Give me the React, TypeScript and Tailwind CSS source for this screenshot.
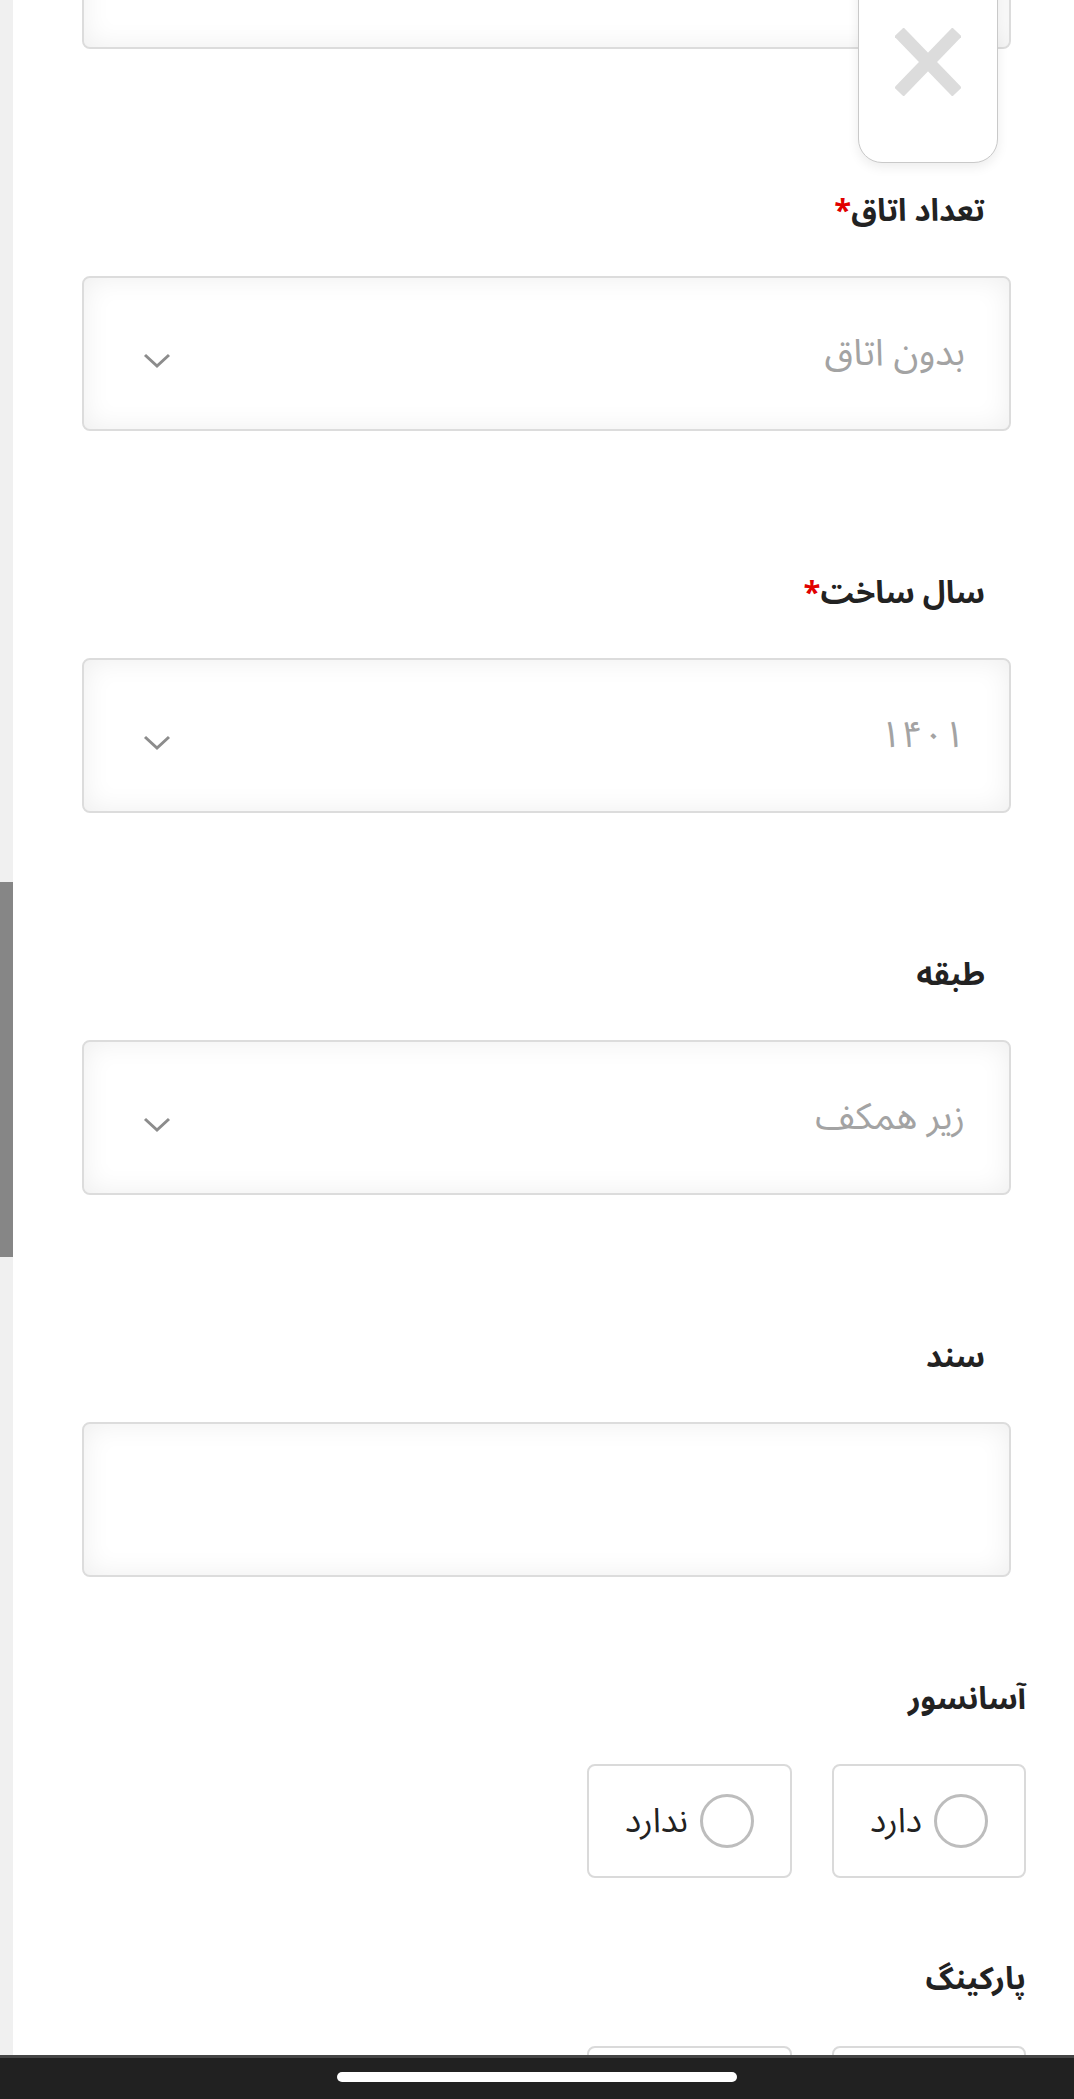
import React from 'react';

const fontStack = "font-['Noto_Sans_Arabic','DejaVu_Sans',sans-serif]";

const Chevron: React.FC = () => (
  <svg width="28" height="16" viewBox="0 0 28 16" className="mt-[14px] shrink-0">
    <polyline points="2,2 14,13 26,2" fill="none" stroke="#8c8c8c" strokeWidth="3" />
  </svg>
);

const FieldLabel: React.FC<{ text: string; required?: boolean; className?: string }> = ({ text, required, className }) => (
  <div className={`flex h-[40px] shrink-0 items-center text-[31px] font-bold leading-[40px] text-[#222] ${className ?? ''}`}>
    <span>{text}</span>
    {required && <span className="text-[#e10000]">*</span>}
  </div>
);

const SelectBox: React.FC<{ value?: string }> = ({ value }) => (
  <div className="flex h-[155px] shrink-0 items-center justify-between rounded-[8px] border-2 border-[#dcdcdc] bg-white pr-[44px] pl-[59px] shadow-[inset_0_0_28px_rgba(0,0,0,0.07)]">
    <span className="text-[37px] text-[#a3a3a3]">{value}</span>
    {value !== undefined && <Chevron />}
  </div>
);

const RadioOption: React.FC<{ label: string }> = ({ label }) => (
  <div className="flex h-[114px] shrink-0 items-center gap-3 rounded-[8px] border-2 border-[#dadada] bg-white px-9">
    <span className="h-[54px] w-[54px] shrink-0 rounded-full border-[3px] border-[#bdbdbd]" />
    <span className="text-[34px] text-[#222]">{label}</span>
  </div>
);

const fields = [
  { label: 'تعداد اتاق', required: true, value: 'بدون اتاق' },
  { label: 'سال ساخت', required: true, value: '۱۴۰۱' },
  { label: 'طبقه', required: false, value: 'زیر همکف' },
  { label: 'سند', required: false, value: undefined },
];

export default function App() {
  return (
    <div className={`relative flex h-[2099px] w-[1074px] items-start overflow-hidden bg-white ${fontStack}`}>
      {/* scrollbar track */}
      <div className="flex h-full w-[13px] shrink-0 flex-col bg-[#f0f0f0]">
        <div className="h-[882px] shrink-0" />
        <div className="h-[375px] shrink-0 bg-[#868686]" />
      </div>

      <main dir="rtl" className="flex flex-1 flex-col pr-[48px] pl-[69px]">
        {/* previous field, scrolled off the top */}
        <div className="mr-[15px] -mt-[106px] h-[155px] shrink-0 rounded-[8px] border-2 border-[#dcdcdc] bg-white shadow-[inset_0_0_28px_rgba(0,0,0,0.07)]" />

        {fields.map((f) => (
          <section key={f.label} className="mr-[15px] flex shrink-0 flex-col">
            <FieldLabel text={f.label} required={f.required} className="mt-[142px] mb-[45px] pr-[26px]" />
            <SelectBox value={f.value} />
          </section>
        ))}

        <section className="flex shrink-0 flex-col">
          <FieldLabel text="آسانسور" className="mt-[102px] mb-[45px]" />
          <div className="flex gap-10">
            <RadioOption label="دارد" />
            <RadioOption label="ندارد" />
          </div>
        </section>

        <section className="flex shrink-0 flex-col">
          <FieldLabel text="پارکینگ" className="mt-[81px] mb-[47px]" />
          <div className="flex gap-10">
            <RadioOption label="دارد" />
            <RadioOption label="ندارد" />
          </div>
        </section>
      </main>

      {/* close button overlay */}
      <div className="absolute top-[-30px] left-[858px] h-[193px] w-[140px] rounded-b-[24px] border-[1.5px] border-[#c9c9c9] bg-white shadow-[0_4px_12px_rgba(0,0,0,0.08)]">
        <svg width="66" height="68" viewBox="0 0 66 68" className="mt-[57px] ml-[36px]">
          <line x1="4" y1="4" x2="62" y2="64" stroke="#dcdcdc" strokeWidth="13" />
          <line x1="62" y1="4" x2="4" y2="64" stroke="#dcdcdc" strokeWidth="13" />
        </svg>
      </div>

      {/* system navigation bar */}
      <div className="absolute right-0 bottom-0 left-0 flex h-[44px] justify-center border-t-[3px] border-[#454545] bg-[#212121] pt-[14px]">
        <div className="h-[10px] w-[400px] rounded-full bg-white" />
      </div>
    </div>
  );
}
